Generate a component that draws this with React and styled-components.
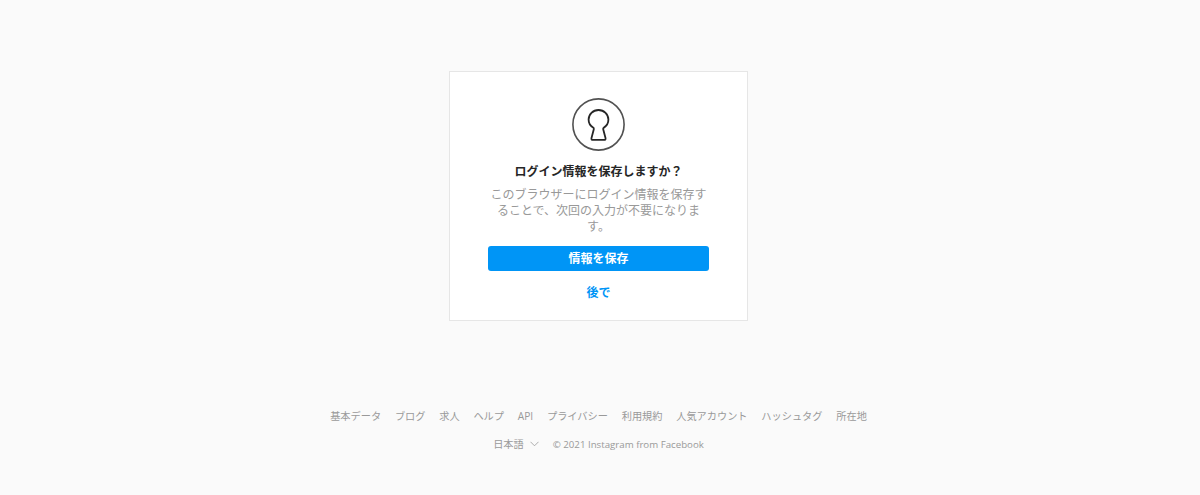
import React from 'react';
import styled, { createGlobalStyle } from 'styled-components';

const GlobalStyle = createGlobalStyle`
  html, body {
    margin: 0;
    padding: 0;
    background: #fafafa;
  }
  body {
    font-family: "Open Sans", "Noto Sans CJK JP", sans-serif;
  }
`;

const Page = styled.div`
  min-height: 495px;
  padding-top: 71px;
  box-sizing: border-box;
  display: flex;
  flex-direction: column;
  align-items: center;
`;

const Card = styled.section`
  width: 299px;
  height: 250px;
  box-sizing: border-box;
  margin-left: -3px;
  padding-top: 26px;
  background: #fff;
  border: 1px solid #e6e6e6;
  display: flex;
  flex-direction: column;
  align-items: center;
`;

const Title = styled.h2`
  margin: 11px 0 0;
  font-size: 12px;
  line-height: 20px;
  font-weight: 700;
  color: #262626;
`;

const Message = styled.p`
  width: 222px;
  margin: 5px 0 0;
  font-size: 12px;
  line-height: 16px;
  color: #999;
  text-align: center;
`;

const SaveButton = styled.button`
  width: 221px;
  height: 25px;
  margin-top: 11px;
  padding: 0 0 2px;
  border: 0;
  border-radius: 3px;
  background: #0095f6;
  color: #fff;
  font: inherit;
  font-size: 12px;
  font-weight: 700;
`;

const LaterButton = styled.button`
  margin-top: 13px;
  padding: 0;
  border: 0;
  background: none;
  color: #0095f6;
  font: inherit;
  font-size: 12px;
  line-height: 18px;
  font-weight: 700;
`;

const Footer = styled.footer`
  margin-top: 88px;
  margin-left: -3px;
  display: flex;
  flex-direction: column;
  align-items: center;
  gap: 13px;
  font-size: 10.2px;
  line-height: 14px;
  color: #999;
`;

const FooterLinks = styled.nav`
  display: flex;
  gap: 13.8px;
`;

const FooterMeta = styled.div`
  display: flex;
  align-items: center;
  gap: 14px;
`;

const Language = styled.span`
  display: inline-flex;
  align-items: center;
  gap: 6px;
`;

const Copyright = styled.span`
  padding-top: 2px;
  font-size: 9.7px;
`;

const Keyhole = () => (
  <svg width="53" height="53" viewBox="0 0 53 53" fill="none" stroke="#262626">
    <circle cx="26.5" cy="26.5" r="25.6" strokeWidth="1.6" opacity="0.8" />
    <path
      d="M26.5 12c-5.6 0-9.9 4.2-9.9 9.6 0 3.5 1.8 6.4 4.5 8 .7.4.9.9.7 1.7l-2.3 8.8c-.3 1.1.2 1.8 1.3 1.8h11.4c1.1 0 1.6-.7 1.3-1.8l-2.3-8.8c-.2-.8 0-1.3.7-1.7 2.7-1.6 4.5-4.5 4.5-8 0-5.4-4.3-9.6-9.9-9.6z"
      strokeWidth="1.8"
      strokeLinejoin="round"
    />
  </svg>
);

const Chevron = () => (
  <svg width="9" height="6" viewBox="0 0 9 6" fill="none" stroke="#999" strokeWidth="0.8">
    <path d="M.5.8l4 4 4-4" />
  </svg>
);

const links = ['基本データ', 'ブログ', '求人', 'ヘルプ', 'API', 'プライバシー', '利用規約', '人気アカウント', 'ハッシュタグ', '所在地'];

export default function App() {
  return (
    <Page>
      <GlobalStyle />
      <Card>
        <Keyhole />
        <Title>ログイン情報を保存しますか？</Title>
        <Message>このブラウザーにログイン情報を保存することで、次回の入力が不要になります。</Message>
        <SaveButton>情報を保存</SaveButton>
        <LaterButton>後で</LaterButton>
      </Card>
      <Footer>
        <FooterLinks>
          {links.map((link) => (
            <span key={link}>{link}</span>
          ))}
        </FooterLinks>
        <FooterMeta>
          <Language>
            日本語 <Chevron />
          </Language>
          <Copyright>© 2021 Instagram from Facebook</Copyright>
        </FooterMeta>
      </Footer>
    </Page>
  );
}
